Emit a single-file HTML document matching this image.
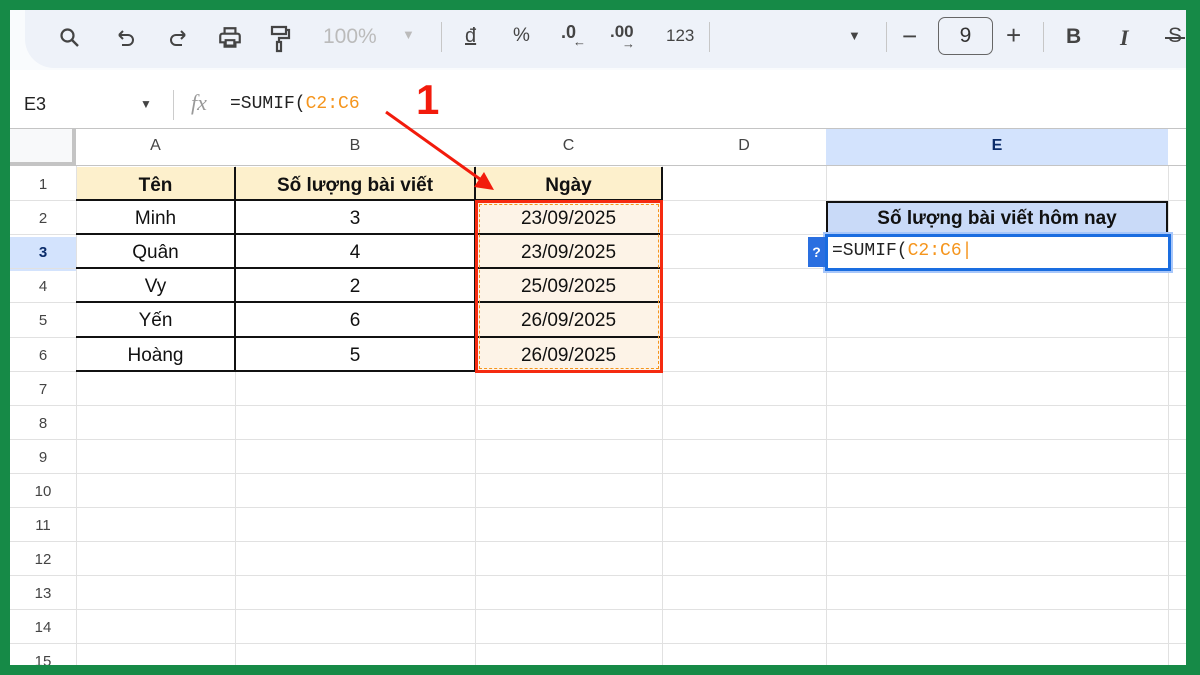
<!DOCTYPE html><html><head><meta charset="utf-8"><style>
*{margin:0;padding:0;box-sizing:border-box}
body{width:1200px;height:675px;background:#168a47;position:relative;overflow:hidden;font-family:"Liberation Sans",Arial,sans-serif}
#app{position:absolute;left:10px;top:10px;width:1176px;height:655px;background:#fff;overflow:hidden}
.a{position:absolute}
.tb{left:0;top:0;width:1176px;height:60px;background:#f9fbfd}
.pill{left:15px;top:0;width:1200px;height:58px;background:#eef2f9;border-radius:0 0 0 29px}
.ic{position:absolute;color:#444;font-size:20px;top:14px}
.sep{position:absolute;top:12px;width:1px;height:30px;background:#c7c7c7}
.gl{position:absolute;background:#e1e1e1}
.rn{position:absolute;left:0;width:66px;text-align:center;font-size:15px;color:#444}
.c{position:absolute;text-align:center;font-size:19px;color:#111;line-height:34px}
.mono{font-family:"Liberation Mono",monospace}
</style></head><body><div id="app">
<div class="a tb"></div><div class="a pill"></div>
<svg class="a" style="left:48px;top:16px" width="24" height="24" viewBox="0 0 24 24"><circle cx="9.5" cy="9.5" r="6" fill="none" stroke="#444" stroke-width="2.2"/><path d="M14 14l6 6" stroke="#444" stroke-width="2.4"/></svg>
<svg class="a" style="left:104px;top:17px" width="24" height="24" viewBox="0 0 24 24"><path d="M5 8h9a5 5 0 010 10H8M5 8l4-4M5 8l4 4" fill="none" stroke="#444" stroke-width="2"/></svg>
<svg class="a" style="left:156px;top:17px" width="24" height="24" viewBox="0 0 24 24"><path d="M19 8h-9a5 5 0 000 10h6M19 8l-4-4M19 8l-4 4" fill="none" stroke="#444" stroke-width="2"/></svg>
<svg class="a" style="left:207px;top:15px" width="26" height="26" viewBox="0 0 24 24"><path d="M7 8V3h10v5M5 8h14a2 2 0 012 2v6h-4v4H7v-4H3v-6a2 2 0 012-2zM8 14h8v5H8z" fill="none" stroke="#444" stroke-width="2"/></svg>
<svg class="a" style="left:258px;top:14px" width="24" height="30" viewBox="0 0 24 30"><path d="M4 3h14v7H4zM18 6h3v8H11v4M9 18h4v9H9z" fill="none" stroke="#444" stroke-width="2.2"/></svg>
<div class="ic" style="left:313px;top:15px;color:#bbb;font-size:21px">100%</div>
<div class="ic" style="left:392px;top:17px;color:#bbb;font-size:13px">▼</div>
<div class="sep" style="left:431px"></div>
<div class="ic" style="left:455px;top:15px;font-size:20px;text-decoration:underline">đ</div>
<div class="ic" style="left:503px;top:15px;font-size:19px">%</div>
<div class="ic" style="left:551px;top:12px;font-size:18px;font-weight:bold">.0<span style="font-size:13px;position:relative;top:8px;left:-3px">←</span></div>
<div class="ic" style="left:600px;top:12px;font-size:17px;font-weight:bold">.00<span style="position:absolute;left:12px;top:14px;font-size:13px">→</span></div>
<div class="ic" style="left:656px;top:16px;font-size:17px">123</div>
<div class="sep" style="left:699px"></div>
<div class="ic" style="left:838px;top:18px;font-size:13px">▼</div>
<div class="sep" style="left:876px"></div>
<div class="ic" style="left:892px;top:11px;font-size:26px">−</div>
<div class="a" style="left:928px;top:7px;width:55px;height:38px;border:1.5px solid #666;border-radius:7px;text-align:center;line-height:35px;font-size:21px;color:#333">9</div>
<div class="ic" style="left:996px;top:10px;font-size:26px">+</div>
<div class="sep" style="left:1033px"></div>
<div class="ic" style="left:1056px;top:15px;font-size:21px;font-weight:bold">B</div>
<div class="ic" style="left:1110px;top:15px;font-size:22px;font-weight:bold;font-style:italic;font-family:'Liberation Serif',serif">I</div>
<div class="ic" style="left:1158px;top:14px;font-size:21px">S</div>
<div class="a" style="left:1155px;top:27px;width:20px;height:2px;background:#444"></div>
<!-- formula bar -->
<div class="a" style="left:14px;top:84px;font-size:18px;color:#222">E3</div>
<div class="a" style="left:130px;top:87px;font-size:12px;color:#444">▼</div>
<div class="a" style="left:163px;top:80px;width:1px;height:30px;background:#ccc"></div>
<div class="a" style="left:181px;top:80px;font-size:22px;color:#999;font-style:italic;font-family:'Liberation Serif',serif">fx</div>
<div class="a mono" style="left:220px;top:84px;font-size:18px;color:#222">=SUMIF(<span style="color:#f5951d">C2:C6</span></div>
<div class="a" style="left:406px;top:66px;font-size:42px;font-weight:bold;color:#f21b0c">1</div>
<!-- grid header -->
<div class="a" style="left:0;top:118px;width:1176px;height:1px;background:#c4c4c4"></div>
<div class="a" style="left:0;top:119px;width:66px;height:37px;background:#f8f9fa;border-right:4px solid #c4c4c4;border-bottom:4px solid #c4c4c4"></div>
<div class="a" style="left:816px;top:119px;width:342px;height:37px;background:#d3e3fd"></div>
<div class="a" style="left:0;top:155px;width:1176px;height:1px;background:#c4c4c4"></div>
<div class="a" style="left:66px;top:127px;width:159px;text-align:center;font-size:16px;color:#444">A</div>
<div class="a" style="left:225px;top:127px;width:240px;text-align:center;font-size:16px;color:#444">B</div>
<div class="a" style="left:465px;top:127px;width:187px;text-align:center;font-size:16px;color:#444">C</div>
<div class="a" style="left:652px;top:127px;width:164px;text-align:center;font-size:16px;color:#444">D</div>
<div class="a" style="left:816px;top:127px;width:342px;text-align:center;font-size:16px;color:#0b2c6a;font-weight:bold">E</div>
<div class="a" style="left:0;top:227px;width:66px;height:34px;background:#d3e3fd"></div>
<div class="a" style="left:66px;top:157px;width:586px;height:34px;background:#fdf0cc"></div>
<div class="a" style="left:465px;top:191px;width:187px;height:170px;background:#fdf3e7"></div>
<div id="g"></div>
<div class="a" style="left:816px;top:191px;width:342px;height:34px;background:#c9daf8;border:2px solid #111"></div>
<div class="c" style="left:816px;top:192px;width:342px;font-weight:bold;font-size:19px">Số lượng bài viết hôm nay</div>
<div class="a" style="left:224px;top:157px;width:2px;height:205px;background:#111"></div>
<div class="a" style="left:464px;top:157px;width:2px;height:205px;background:#111"></div>
<div class="a" style="left:651px;top:157px;width:2px;height:34px;background:#111"></div>
<div class="c" style="left:66px;top:159px;width:159px;font-weight:bold">Tên</div>
<div class="c" style="left:225px;top:159px;width:240px;font-weight:bold">Số lượng bài viết</div>
<div class="c" style="left:465px;top:159px;width:187px;font-weight:bold">Ngày</div>
<div class="a" style="left:465px;top:190px;width:188px;height:173px;border:3px solid #f52a10"></div>
<div class="a" style="left:469px;top:194px;width:180px;height:165px;border:1px dashed #f5951d"></div>
<svg class="a" style="left:370px;top:96px" width="120" height="90" viewBox="0 0 120 90"><path d="M6 6L104 76" stroke="#f21b0c" stroke-width="3"/><path d="M114 84l-20-3 10-15z" fill="#f21b0c"/></svg>
<!-- edit cell -->
<div class="a" style="left:815px;top:224px;width:346px;height:37px;border:3px solid #1a6de0;background:#fff;box-shadow:0 0 0 2px #a8c7fa"></div>
<div class="a" style="left:798px;top:227px;width:17px;height:30px;background:#2a6fe0;color:#fff;font-weight:bold;font-size:14px;text-align:center;line-height:30px">?</div>
<div class="a mono" style="left:822px;top:231px;font-size:18px;color:#222">=SUMIF(<span style="color:#f5951d">C2:C6</span><span style="color:#f5951d">|</span></div>
</div>
<script>
var g=document.getElementById('g'),h='';
var cols=[66,225,465,652,816,1158];
for(var i=0;i<cols.length;i++)h+='<div class="gl" style="left:'+cols[i]+'px;top:156px;width:1px;height:500px"></div>';
var names=['Minh','Quân','Vy','Yến','Hoàng'],nums=['3','4','2','6','5'],dates=['23/09/2025','23/09/2025','25/09/2025','26/09/2025','26/09/2025'];
for(var n=1;n<=15;n++){var t=Math.round(156+34.1*(n-1)),b=Math.round(156+34.1*n);
h+='<div class="gl" style="left:0;top:'+b+'px;width:1176px;height:1px"></div>';
h+='<div class="rn" style="top:'+(t+10)+'px;'+(n==3?'color:#0b2c6a;font-weight:bold':'')+'">'+n+'</div>';
if(n>=2&&n<=6){h+='<div class="a" style="left:66px;top:'+(b-1)+'px;width:586px;height:2px;background:#111"></div>';
h+='<div class="c" style="left:66px;top:'+(t+2)+'px;width:159px">'+names[n-2]+'</div><div class="c" style="left:225px;top:'+(t+2)+'px;width:240px">'+nums[n-2]+'</div><div class="c" style="left:465px;top:'+(t+2)+'px;width:187px">'+dates[n-2]+'</div>';}
if(n==1)h+='<div class="a" style="left:66px;top:'+(b-1)+'px;width:586px;height:2px;background:#111"></div>';}
g.innerHTML=h;
</script>
</body></html>
